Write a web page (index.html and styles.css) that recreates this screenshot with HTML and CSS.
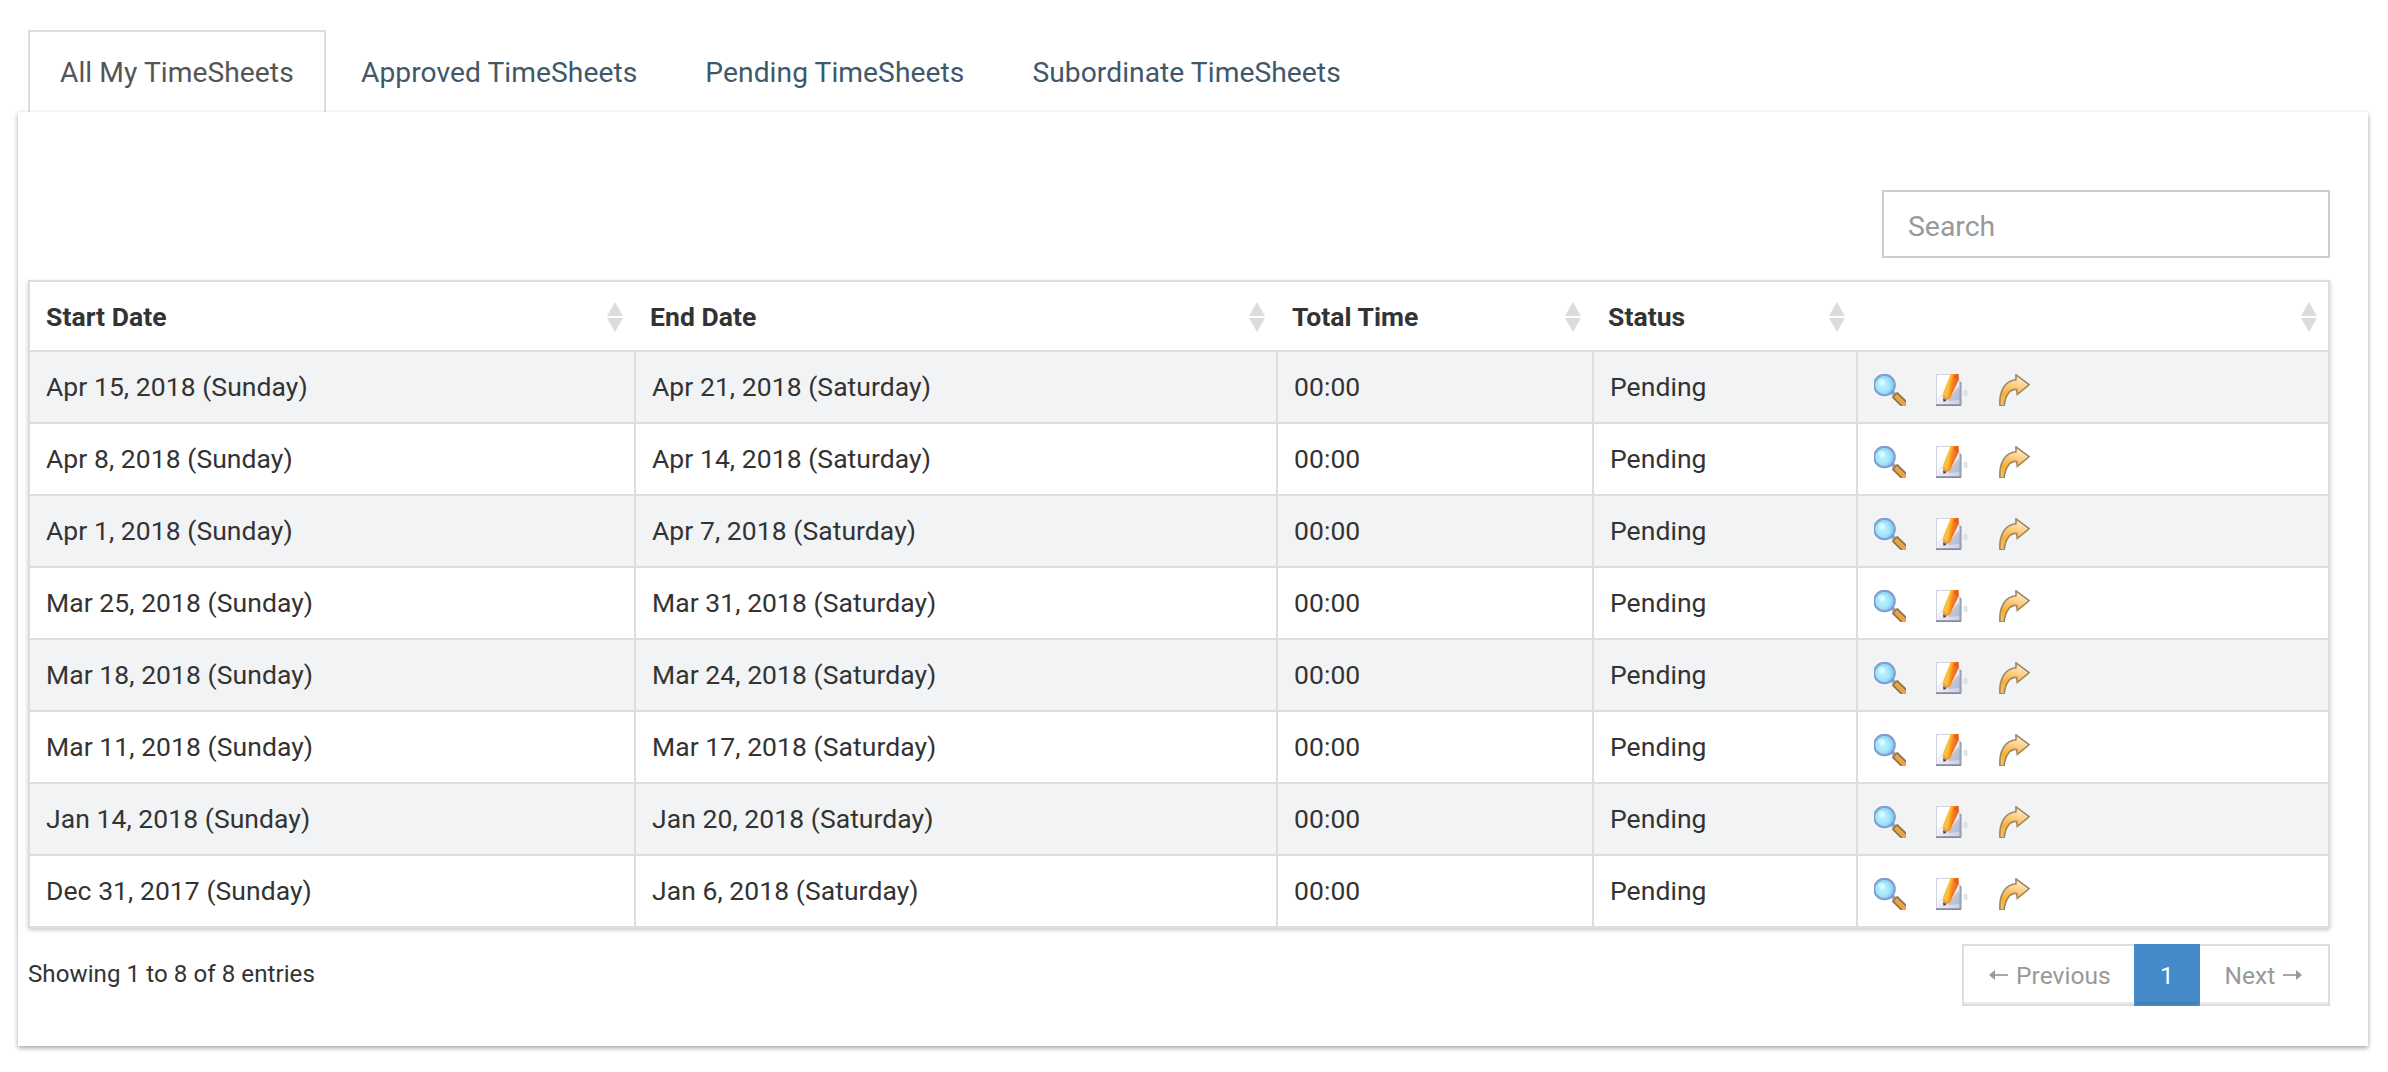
FILE: index.html
```html
<!DOCTYPE html>
<html lang="en">
<head>
<meta charset="utf-8">
<title>TimeSheets</title>
<link rel="stylesheet" href="styles.css">
</head>
<body>
<svg class="sprite" aria-hidden="true">
  <defs>
    <radialGradient id="lens" cx="0.42" cy="0.5" r="0.62">
      <stop offset="0" stop-color="#c4f3ff"/>
      <stop offset="0.5" stop-color="#a4e6fe"/>
      <stop offset="1" stop-color="#6fbdf0"/>
    </radialGradient>
    <linearGradient id="paper" x1="0" y1="0" x2="1" y2="1">
      <stop offset="0.3" stop-color="#ffffff"/>
      <stop offset="1" stop-color="#c3c8dc"/>
    </linearGradient>
    <linearGradient id="pencil" x1="0" y1="0" x2="1" y2="0.3">
      <stop offset="0.1" stop-color="#ffb52e"/>
      <stop offset="0.45" stop-color="#ffc437"/>
      <stop offset="0.65" stop-color="#f7861f"/>
      <stop offset="1" stop-color="#e8541c"/>
    </linearGradient>
    <linearGradient id="gold" x1="0.6" y1="0" x2="0.35" y2="1">
      <stop offset="0" stop-color="#fff0d4"/>
      <stop offset="0.45" stop-color="#fdc26b"/>
      <stop offset="0.7" stop-color="#f9ad35"/>
      <stop offset="1" stop-color="#f5c64e"/>
    </linearGradient>
  </defs>
  <symbol id="view" viewBox="0 0 32 32">
    <path d="M18 18l4 4" stroke="#9c9eb0" stroke-width="4"/>
    <path d="M20.500 20.500L32 32" stroke="#96703f" stroke-width="8"/>
    <path d="M21.500 21.500L32 32" stroke="#e5a548" stroke-width="4.500"/>
    <circle cx="10.500" cy="11" r="10.300" fill="url(#lens)" stroke="#7f9cca" stroke-width="2"/>
    <circle cx="8" cy="8" r="3" fill="#fff" opacity="0.55"/>
  </symbol>
  <symbol id="edit" viewBox="0 0 32 32">
    <path d="M0.500 0.500H20L25 9V31H0.500z" fill="url(#paper)" stroke="#cdd1e2"/>
    <path d="M24.500 8V31" stroke="#9ba1b6" stroke-width="2"/>
    <path d="M0 31.200H25" stroke="#82879f" stroke-width="1.800"/>
    <path d="M12 27l10-14 2 3v10z" fill="#9ba1b8" opacity="0.45"/>
    <ellipse cx="29.500" cy="19" rx="2.200" ry="3.200" fill="#dcdde1" opacity="0.8"/>
    <path d="M14.500 0H22.500L22.800 5.500L14 24.500L8 27.500L6.500 21z" fill="url(#pencil)"/>
    <path d="M19 0H22.500L22.800 4.500L20.500 6L17.500 3.500z" fill="#e9581f" opacity="0.75"/>
    <path d="M7 21.500L13 24.500L8 27.800z" fill="#d99a72"/>
    <path d="M7 24.500l3.500 1.800L7.600 28z" fill="#7c3327"/>
  </symbol>
  <symbol id="forward" viewBox="0 0 32 32">
    <path d="M18 0.800L31.200 10.700L19.300 20.500L18.600 15.500C12 14.500 7.500 21 6 32H2C0.800 18 6.500 6.500 18 5.800z" fill="url(#gold)" stroke="#9c8766" stroke-width="1.600"/>
  </symbol>
  <symbol id="sort" viewBox="0 0 16 30">
    <path d="M8 0L16 14H0zM0 16H16L8 30z" fill="#dcdcdc"/>
  </symbol>
</svg>

<nav class="tabs">
  <a class="tab tab-active">All My TimeSheets</a>
  <a class="tab">Approved TimeSheets</a>
  <a class="tab">Pending TimeSheets</a>
  <a class="tab">Subordinate TimeSheets</a>
</nav>

<main class="panel">
  <input class="search" type="text" placeholder="Search">
  <table class="grid">
    <colgroup><col class="c-start"><col class="c-end"><col class="c-total"><col class="c-status"><col class="c-actions"></colgroup>
    <thead>
      <tr>
        <th><div class="head">Start Date<svg class="sort"><use href="#sort"/></svg></div></th>
        <th><div class="head">End Date<svg class="sort"><use href="#sort"/></svg></div></th>
        <th><div class="head">Total Time<svg class="sort"><use href="#sort"/></svg></div></th>
        <th><div class="head">Status<svg class="sort"><use href="#sort"/></svg></div></th>
        <th><div class="head"><svg class="sort"><use href="#sort"/></svg></div></th>
      </tr>
    </thead>
    <tbody>
      <tr><td>Apr 15, 2018 (Sunday)</td><td>Apr 21, 2018 (Saturday)</td><td>00:00</td><td>Pending</td><td><div class="actions"><svg><use href="#view"/></svg><svg><use href="#edit"/></svg><svg><use href="#forward"/></svg></div></td></tr>
      <tr><td>Apr 8, 2018 (Sunday)</td><td>Apr 14, 2018 (Saturday)</td><td>00:00</td><td>Pending</td><td><div class="actions"><svg><use href="#view"/></svg><svg><use href="#edit"/></svg><svg><use href="#forward"/></svg></div></td></tr>
      <tr><td>Apr 1, 2018 (Sunday)</td><td>Apr 7, 2018 (Saturday)</td><td>00:00</td><td>Pending</td><td><div class="actions"><svg><use href="#view"/></svg><svg><use href="#edit"/></svg><svg><use href="#forward"/></svg></div></td></tr>
      <tr><td>Mar 25, 2018 (Sunday)</td><td>Mar 31, 2018 (Saturday)</td><td>00:00</td><td>Pending</td><td><div class="actions"><svg><use href="#view"/></svg><svg><use href="#edit"/></svg><svg><use href="#forward"/></svg></div></td></tr>
      <tr><td>Mar 18, 2018 (Sunday)</td><td>Mar 24, 2018 (Saturday)</td><td>00:00</td><td>Pending</td><td><div class="actions"><svg><use href="#view"/></svg><svg><use href="#edit"/></svg><svg><use href="#forward"/></svg></div></td></tr>
      <tr><td>Mar 11, 2018 (Sunday)</td><td>Mar 17, 2018 (Saturday)</td><td>00:00</td><td>Pending</td><td><div class="actions"><svg><use href="#view"/></svg><svg><use href="#edit"/></svg><svg><use href="#forward"/></svg></div></td></tr>
      <tr><td>Jan 14, 2018 (Sunday)</td><td>Jan 20, 2018 (Saturday)</td><td>00:00</td><td>Pending</td><td><div class="actions"><svg><use href="#view"/></svg><svg><use href="#edit"/></svg><svg><use href="#forward"/></svg></div></td></tr>
      <tr><td>Dec 31, 2017 (Sunday)</td><td>Jan 6, 2018 (Saturday)</td><td>00:00</td><td>Pending</td><td><div class="actions"><svg><use href="#view"/></svg><svg><use href="#edit"/></svg><svg><use href="#forward"/></svg></div></td></tr>
    </tbody>
  </table>
  <footer class="foot">
    <span class="info">Showing 1 to 8 of 8 entries</span>
    <div class="pager">
      <a class="page prev"><svg class="arrow" viewBox="0 0 19 12"><path d="M5 6H19" stroke="#999" stroke-width="1.700"/><path d="M0 6L6 1V11z" fill="#999"/></svg>Previous</a>
      <a class="page current">1</a>
      <a class="page next">Next<svg class="arrow" viewBox="0 0 19 12"><path d="M0 6H14" stroke="#999" stroke-width="1.700"/><path d="M19 6L13 1V11z" fill="#999"/></svg></a>
    </div>
  </footer>
</main>
</body>
</html>
```

FILE: styles.css
```css
* {
  box-sizing: border-box;
}

body {
  margin: 0;
  padding: 30px 20px 26px 18px;
  background: #fff;
  color: #333;
  font-family: Roboto, "Open Sans", sans-serif;
  font-size: 26.5px;
  letter-spacing: 0.06px;
}

.sprite {
  position: absolute;
  width: 0;
  height: 0;
}

.tabs {
  display: flex;
  gap: 4px;
  padding-left: 10px;
  height: 82px;
}

.tab {
  padding: 0 30px;
  border: 2px solid transparent;
  border-bottom: 0;
  color: #3f586a;
  font-size: 28.2px;
  letter-spacing: 0.06px;
  line-height: 82px;
  white-space: nowrap;
}

.tab-active {
  width: 298px;
  margin-right: -1px;
  border-color: #ddd;
  color: #555;
}

.panel {
  position: relative;
  display: flex;
  flex-direction: column;
  height: 934px;
  padding: 78px 38px 0 10px;
  background: #fff;
  box-shadow: 0 2px 6px rgba(0, 0, 0, 0.14), 0 2px 4px rgba(0, 0, 0, 0.24);
}

.search {
  align-self: flex-end;
  width: 448px;
  height: 68px;
  margin-bottom: 22px;
  padding: 4px 24px 0;
  border: 2px solid #ccc;
  border-radius: 0;
  background: #fff;
  color: #555;
  font: 28.4px Roboto, sans-serif;
}

.search::placeholder {
  color: #999;
  opacity: 1;
}

.grid {
  width: 2302px;
  table-layout: fixed;
  border: 2px solid #ddd;
  border-collapse: separate;
  border-spacing: 0;
  box-shadow: 0 2px 6px rgba(0, 0, 0, 0.08), 0 2px 4px rgba(0, 0, 0, 0.14);
}

.c-start { width: 606px; }
.c-end { width: 642px; }
.c-total { width: 316px; }
.c-status { width: 264px; }
.c-actions { width: 470px; }

th {
  height: 70px;
  padding: 0 13px 0 14px;
  border-bottom: 2px solid #ddd;
  text-align: left;
}

th:first-child {
  padding-left: 16px;
}

th:last-child {
  padding-right: 11px;
}

.head {
  display: flex;
  align-items: center;
}

.sort {
  width: 16px;
  height: 30px;
  margin: 2px 0 0 auto;
}

td {
  height: 72px;
  padding: 0 16px 1px;
  border-right: 2px solid #ddd;
  border-bottom: 2px solid #ddd;
}

td:last-child {
  padding-bottom: 0;
  border-right: 0;
}

tbody tr:nth-child(odd) {
  background: #f2f3f5;
}

tbody tr:last-child td {
  height: 70px;
  border-bottom: 0;
}

.actions {
  display: flex;
  gap: 30px;
  padding-top: 6px;
}

.actions svg {
  width: 32px;
  height: 32px;
}

.foot {
  display: flex;
  justify-content: space-between;
  margin-top: 16px;
}

.info {
  font-size: 24.1px;
  line-height: 61px;
}

.pager {
  display: flex;
}

.page {
  display: flex;
  align-items: center;
  height: 62px;
  border: 2px solid #ddd;
  box-shadow: inset 0 -2px 0 #eaeaea;
  color: #999;
  font-size: 24.5px;
}

.prev {
  width: 172px;
  padding-left: 25px;
  gap: 8px;
  border-right: 0;
}

.current {
  width: 66px;
  justify-content: center;
  border-color: #468bc9;
  background: #468bc9;
  box-shadow: inset 0 -2px 0 #3f7db5;
  color: #fff;
}

.next {
  width: 130px;
  padding-left: 24.5px;
  gap: 8px;
  border-left: 0;
}

.arrow {
  width: 19px;
  height: 12px;
}
```
